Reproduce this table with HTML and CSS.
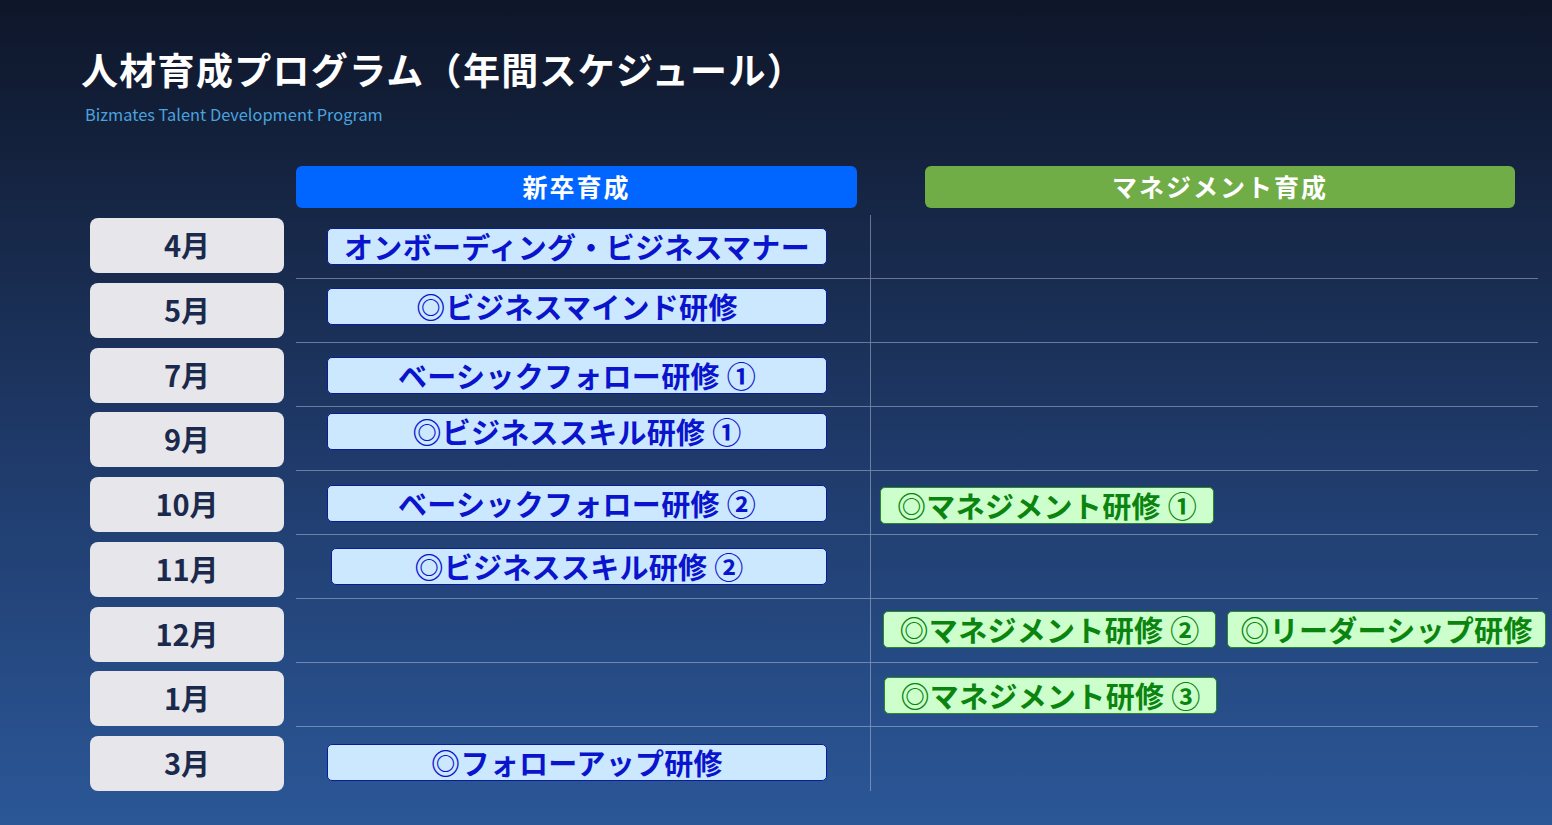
FILE: index.html
```html
<!DOCTYPE html>
<html lang="ja">
<head>
<meta charset="utf-8">
<title>人材育成プログラム</title>
<link rel="stylesheet" href="styles.css">
</head>
<body>
<div class="page">
  <h1 class="title">人材育成プログラム（年間スケジュール）</h1>
  <p class="subtitle">Bizmates Talent Development Program</p>
  <div class="schedule">
    <div class="months">
      <div class="month">4月</div>
      <div class="month">5月</div>
      <div class="month">7月</div>
      <div class="month">9月</div>
      <div class="month">10月</div>
      <div class="month">11月</div>
      <div class="month">12月</div>
      <div class="month">1月</div>
      <div class="month">3月</div>
    </div>
    <div class="board">
      <div class="heads">
        <div class="head head-new">新卒育成</div>
        <div class="head head-mgmt">マネジメント育成</div>
      </div>
      <div class="rows">
        <div class="row">
          <div class="cell cell-left"><div class="pill blue mt13">オンボーディング・ビジネスマナー</div></div>
          <div class="cell cell-right"></div>
        </div>
        <div class="row">
          <div class="cell cell-left"><div class="pill blue mt9">◎ビジネスマインド研修</div></div>
          <div class="cell cell-right"></div>
        </div>
        <div class="row">
          <div class="cell cell-left"><div class="pill blue mt14">ベーシックフォロー研修 ①</div></div>
          <div class="cell cell-right"></div>
        </div>
        <div class="row">
          <div class="cell cell-left"><div class="pill blue mt6">◎ビジネススキル研修 ①</div></div>
          <div class="cell cell-right"></div>
        </div>
        <div class="row">
          <div class="cell cell-left"><div class="pill blue mt14">ベーシックフォロー研修 ②</div></div>
          <div class="cell cell-right"><div class="pill green mt16 gl9">◎マネジメント研修 ①</div></div>
        </div>
        <div class="row">
          <div class="cell cell-left"><div class="pill blue mt13 narrow">◎ビジネススキル研修 ②</div></div>
          <div class="cell cell-right"></div>
        </div>
        <div class="row">
          <div class="cell cell-left"></div>
          <div class="cell cell-right">
            <div class="pill green mt12">◎マネジメント研修 ②</div>
            <div class="pill green mt12 wide">◎リーダーシップ研修</div>
          </div>
        </div>
        <div class="row">
          <div class="cell cell-left"></div>
          <div class="cell cell-right"><div class="pill green mt14 gl13">◎マネジメント研修 ③</div></div>
        </div>
        <div class="row">
          <div class="cell cell-left"><div class="pill blue mt17">◎フォローアップ研修</div></div>
          <div class="cell cell-right"></div>
        </div>
      </div>
    </div>
  </div>
</div>
</body>
</html>
```

FILE: styles.css
```css
* { box-sizing: border-box; }
html, body {
  margin: 0;
  padding: 0;
}
body {
  width: 1552px;
  height: 825px;
  overflow: hidden;
  font-family: "Noto Sans CJK JP", "Noto Sans", sans-serif;
  background: linear-gradient(180deg, #0e1629 0%, #162645 25%, #1f3a6a 55%, #2b5797 100%);
}
.page {
  width: 1552px;
  height: 825px;
  padding: 44px 0 0 81px;
}
.title {
  margin: 0;
  font-size: 37px;
  line-height: 50px;
  font-weight: 700;
  color: #ffffff;
  letter-spacing: 1.3px;
}
.subtitle {
  margin: 10px 0 0 4px;
  font-size: 16.4px;
  line-height: 20px;
  color: #4aa3df;
}
.schedule {
  display: flex;
  margin-top: 42px;
  margin-left: 9px;
  gap: 12px;
}
.months {
  width: 194px;
  padding-top: 52px;
  display: flex;
  flex-direction: column;
  gap: 9.75px;
}
.month {
  height: 55px;
  padding-bottom: 3px;
  border-radius: 8px;
  background: #e7e6ea;
  color: #1b2a4c;
  font-size: 29px;
  font-weight: 700;
  display: flex;
  align-items: center;
  justify-content: center;
}
.board {
  width: 1242px;
}
.heads {
  display: flex;
  height: 42px;
  margin-bottom: 7px;
}
.head {
  height: 42px;
  padding-bottom: 3px;
  border-radius: 6px;
  color: #ffffff;
  font-size: 25px;
  font-weight: 700;
  letter-spacing: 2px;
  display: flex;
  align-items: center;
  justify-content: center;
}
.head-new {
  width: 561px;
  background: #0066ff;
}
.head-mgmt {
  width: 590px;
  margin-left: 68px;
  background: #70ad47;
}
.rows {
  display: flex;
  flex-direction: column;
}
.row {
  display: flex;
  height: 64px;
  border-bottom: 1px solid rgba(200, 210, 230, 0.45);
}
.row:last-child {
  border-bottom: none;
}
.cell {
  display: flex;
  align-items: flex-start;
}
.cell-left {
  width: 575px;
  border-right: 1px solid rgba(200, 210, 230, 0.45);
  padding-left: 31px;
}
.cell-right {
  width: 667px;
  padding-left: 12px;
  gap: 11px;
}
.pill {
  height: 37px;
  padding-bottom: 2px;
  border-radius: 5px;
  font-size: 29px;
  font-weight: 700;
  letter-spacing: 0.3px;
  white-space: nowrap;
  display: flex;
  align-items: center;
  justify-content: center;
}
.blue {
  width: 500px;
  background: #cce8ff;
  border: 1px solid #0a1c9e;
  color: #0a14cc;
}
.blue.narrow {
  width: 496px;
  margin-left: 4px;
}
.green {
  width: 333px;
  background: #ccffcc;
  border: 1px solid #2a8a2a;
  color: #0b840f;
  flex-shrink: 0;
}
.green.wide {
  width: 319px;
}
.gl9 { margin-left: -3px; width: 334px; }
.gl13 { margin-left: 1px; }
.mt6 { margin-top: 6px; }
.mt9 { margin-top: 9px; }
.mt12 { margin-top: 12px; }
.mt13 { margin-top: 13px; }
.mt14 { margin-top: 14px; }
.mt16 { margin-top: 16px; }
.mt17 { margin-top: 17px; }
```
